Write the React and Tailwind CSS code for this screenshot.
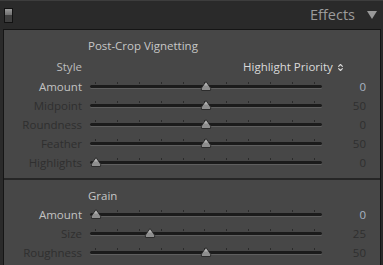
import { ChevronsUpDown } from "lucide-react";

const vignette = [
  { label: "Amount", value: "0", pos: 116, active: true },
  { label: "Midpoint", value: "50", pos: 116 },
  { label: "Roundness", value: "0", pos: 116 },
  { label: "Feather", value: "50", pos: 116 },
  { label: "Highlights", value: "0", pos: 6 },
];

const grain = [
  { label: "Amount", value: "0", pos: 6, active: true },
  { label: "Size", value: "25", pos: 60 },
  { label: "Roughness", value: "50", pos: 116 },
];

function Thumb() {
  return (
    <svg width="12" height="10" viewBox="0 0 12 10">
      <path d="M6 0.5 L9.2 5 Q11.5 7.2 10.5 9.5 L1.5 9.5 Q0.5 7.2 2.8 5 Z" fill="#8e8e8e" stroke="#2c2c2c" strokeWidth="1" />
      <path d="M6 1.5 L8 4.5 L4 4.5 Z" fill="#b0b0b0" />
    </svg>
  );
}

function Slider({ pos }) {
  return (
    <div className="relative w-[232px] h-[19px]">
      <div className="absolute left-0 right-0 top-[5px] flex justify-between pl-[5px] pr-[7px]">
        {Array.from({ length: 11 }).map((_, i) => (
          <span key={i} className="w-px h-[2px] bg-[#2a2a2a]"></span>
        ))}
      </div>
      <div className="absolute left-0 right-0 top-[8px] h-[3px] rounded-full bg-[#1b1b1b] shadow-[0_1px_0_#5f5f5f]"></div>
      <div className="absolute top-[4px]" style={{ left: pos - 6 }}>
        <Thumb />
      </div>
    </div>
  );
}

function Row({ item }) {
  return (
    <div className="flex items-center h-[19px]">
      <div className={`w-[78px] text-right ${item.active ? "text-[#c2c2c2]" : "text-[#2f2f2f]"}`}>{item.label}</div>
      <div className="ml-[8px]">
        <Slider pos={item.pos} />
      </div>
      <div className={`w-[44px] text-right ${item.active ? "text-[#a8b4c2]" : "text-[#2f2f2f]"}`}>{item.value}</div>
    </div>
  );
}

export default function App() {
  return (
    <div className="w-[383px] h-[265px] overflow-hidden bg-[#2a2a2a] text-[11.5px] font-['Open_Sans','Noto_Sans',sans-serif] leading-none">
      {/* header */}
      <div className="h-[29px] border-t border-[#3d3d3d] flex items-center pl-[4px] pr-[6px]">
        <div className="w-[9px] h-[15px] border border-[#121212] flex flex-col">
          <div className="flex-1 bg-gradient-to-b from-[#9a9a9a] to-[#707070]"></div>
          <div className="flex-1 bg-[#3f3f3f]"></div>
        </div>
        <div className="ml-auto text-[14.5px] text-[#9c9c9c]">Effects</div>
        <svg className="ml-[12px]" width="10" height="8" viewBox="0 0 10 8">
          <path d="M0 0 L10 0 L5 8 Z" fill="#999999" />
        </svg>
      </div>

      {/* panel */}
      <div className="ml-[3px] mr-[2px] h-full border-l border-r border-t border-[#151515] bg-[#474747]">
        <div className="pt-[7px]">
          <div className="h-[18px] flex items-center pl-[84px] text-[#c6c6c6]">Post-Crop Vignetting</div>
          <div className="mt-[2px] h-[20px] flex items-center">
            <div className="w-[78px] text-right text-[#bdbdbd]">Style</div>
            <div className="ml-[161px] flex items-center text-[#dadada]">
              Highlight Priority
              <ChevronsUpDown className="w-[9px] h-[9px] ml-[3px]" strokeWidth={3} />
            </div>
          </div>
          {vignette.map((item) => (
            <Row key={item.label} item={item} />
          ))}
        </div>

        <div className="mt-[6px] h-[2px] bg-[#262626]"></div>

        <div className="pt-[7px]">
          <div className="h-[18px] flex items-center pl-[84px] text-[#c6c6c6]">Grain</div>
          {grain.map((item) => (
            <Row key={item.label} item={item} />
          ))}
        </div>
      </div>
    </div>
  );
}
